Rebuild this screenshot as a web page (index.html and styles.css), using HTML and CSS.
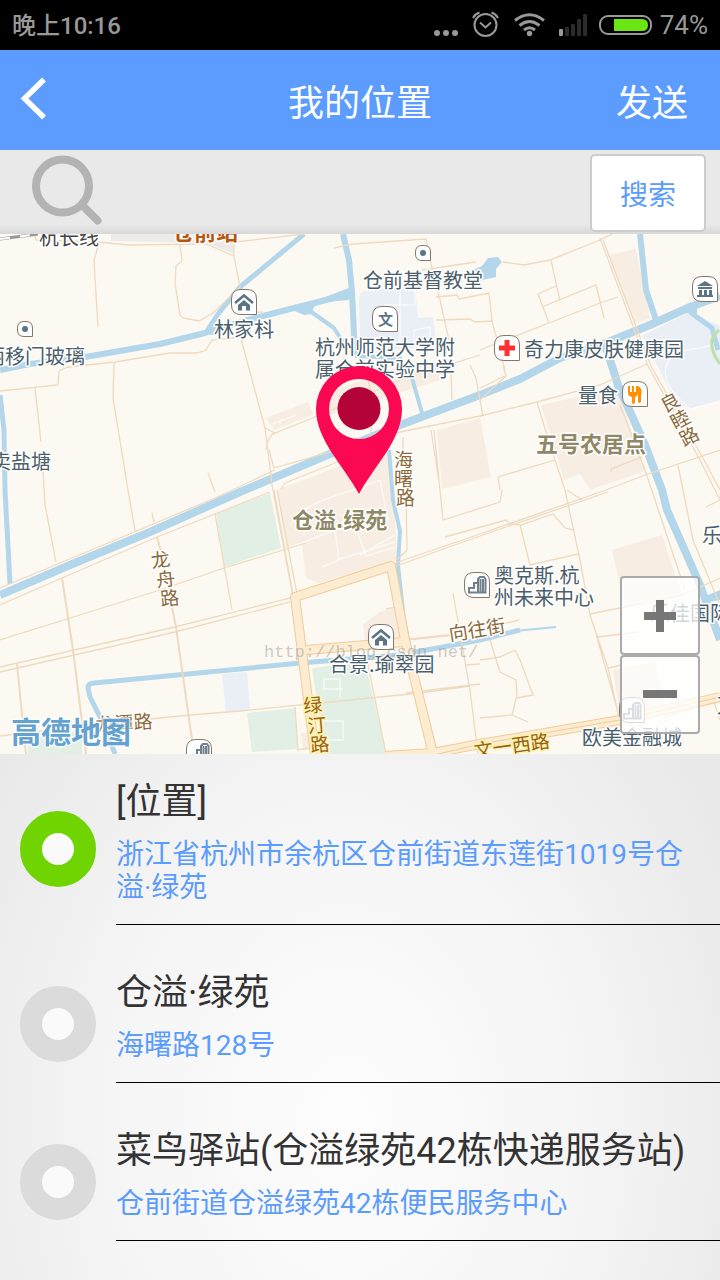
FILE: index.html
```html
<!DOCTYPE html>
<html lang="zh-CN">
<head>
<meta charset="utf-8">
<meta name="viewport" content="width=device-width, initial-scale=1">
<title>我的位置</title>
<link rel="stylesheet" href="styles.css">
</head>
<body>
<div class="screen">
  <div class="status">
    <span class="status-time">晚上10:16</span>
    <div class="status-icons">
      <svg width="220" height="30" viewBox="434 10 220 30" aria-hidden="true">
        <g fill="#999"><circle cx="437" cy="33" r="3"/><circle cx="446" cy="33" r="3"/><circle cx="455" cy="33" r="3"/></g>
        <g fill="none" stroke="#999" stroke-width="2">
          <circle cx="485.500" cy="25" r="11"/><path d="M480 22.500l5.500 5 5.500-5M473 18q2-4 6.500-5.500M498 18q-2-4-6.500-5.500"/>
        </g>
        <g fill="none" stroke="#999" stroke-width="3">
          <path d="M515 20.500q14.500-11.500 29 0M519.500 25.500q10-8 20 0M524 30q5.500-4.500 11 0"/>
        </g>
        <circle cx="529.500" cy="33.500" r="2.700" fill="#999"/>
        <rect x="559" y="29" width="4" height="7" rx="1" fill="#999"/>
        <g fill="#2b2b2b"><rect x="565" y="27" width="4" height="9" rx="1"/><rect x="571" y="24" width="4" height="12" rx="1"/><rect x="577" y="19" width="4" height="17" rx="1"/><rect x="583" y="14" width="4" height="22" rx="1"/></g>
        <rect x="600" y="16" width="51" height="18" rx="8" fill="none" stroke="#999" stroke-width="2"/>
        <path d="M614 19h28q6 0 6 6t-6 6h-28z" fill="#69e614"/>
      </svg>
      <span class="status-battery">74%</span>
    </div>
  </div>

  <header class="header">
    <button class="back" type="button" aria-label="返回">
      <svg width="28" height="48" viewBox="20 76 28 48" aria-hidden="true"><path d="M44 79.500L24.500 98.500 44 117.500" fill="none" stroke="#fff" stroke-width="5.500"/></svg>
    </button>
    <h1 class="title">我的位置</h1>
    <button class="send" type="button">发送</button>
  </header>

  <form class="search" onsubmit="return false">
    <label class="search-icon" for="q" aria-label="搜索地点">
      <svg width="72" height="74" viewBox="31 154 72 74" aria-hidden="true"><circle cx="62.500" cy="186" r="26.500" fill="none" stroke="#b3b3b3" stroke-width="8"/><path d="M83 206L97.500 220.500" stroke="#b3b3b3" stroke-width="8" stroke-linecap="round"/></svg>
    </label>
    <input class="search-input" id="q" type="text">
    <button class="search-button" type="submit">搜索</button>
  </form>

  <section class="map" aria-label="地图">
    <svg class="map-canvas" viewBox="0 234 720 520">
      <defs>
        <path id="bubble" d="M-3-12.500H3Q12.500-12.500 12.500-3V12.500H-3Q-12.500 12.500-12.500 3V-3Q-12.500-12.500-3-12.500z"/>
        <path id="dot-bubble" d="M-1-7.500H1Q7.500-7.500 7.500-1V7.500H-1Q-7.500 7.500-7.500 1V-1Q-7.500-7.500-1-7.500z"/>
        <g id="home"><path d="M-9 1L0-6.500 9 1" fill="none" stroke="#5c7585" stroke-width="2.500"/><path d="M-6 3L0-2 6 3V8.500H2V4H-2V8.500H-6z" fill="#5c7585"/></g>
        <g id="tower" fill="#fff" stroke="#70818b" stroke-width="2"><path d="M-9 7.500V3H-4V-2H0V7.500zM0 7.500V-6L2-8H6L7.500-6V7.500z"/><path d="M2.500-6V7M5-6V7"/></g>
      </defs>
      <rect y="234" width="720" height="520" fill="#fcf9f2"/>

      <g fill="#f7ede2">
        <path d="M266 418L308 402 313 415 274 430zM320 395L400 367 444 365 446 378 330 415zM277 490L382 450 391 452 397 560 318 583 306 578 302 543 286 547zM437 430L480 418 491 477 442 489zM541 405L617 388 645 471 590 490 580 474 564 480zM609 255L636 249 650 318 635 324zM612 550L662 535 682 595 625 607zM613 670L655 662 665 705 620 715zM363 624L380 612 395 608 401 640 365 645zM301 733L325 730 327 748 303 750z"/>
      </g>
      <g fill="#e2efe5">
        <path d="M216 514L270 493 281 548 224 567zM312 668L365 662 383 740 385 754H325zM247 713L295 708 298 749 252 752zM28 738L82 731V754H28z"/>
      </g>
      <g fill="#eaeef5">
        <path d="M359 298Q360 290 368 291L415 285 418 318 433 317 436 343 400 350 360 342zM222 674L247 672 250 709 226 712zM642 336L690 312 720 326V400L690 409 675 400z"/>
      </g>
      <path d="M111 234H234V254L206 243 111 241z" fill="#edebe8"/>
      <g fill="none" stroke="#fff" stroke-opacity=".65" stroke-width="1.500">
        <path d="M400 285V346M384 305H415V285M414 345V330L430 327V344M272 424L296 415M280 420V424M304 510L323 500 381 480M297 545L335 530 339 560 322 567M335 530L390 518M354 523L366 556 396 547M337 560L395 542M360 555L395 535M380 480L388 520M324 679H340V697M324 679V689H343M323 721H343V740H324M668 362L674 352 700 348 713 345M668 362Q660 375 675 395L690 409 720 402"/>
      </g>

      <g fill="none" stroke="#b3d6eb" stroke-linejoin="round">
        <path d="M0 370L30 364 85 357 160 344 205 333 240 322 290 309 350 294" stroke-width="6"/>
        <path d="M205 334L218 314 240 287 304 234" stroke-width="5"/>
        <path d="M343 234L349 260 352 292 355 356M640 234L646 290 656 320" stroke-width="6"/>
        <path d="M310 311L334 328 344 344M355 356L400 358 412 378 422 413" stroke-width="4"/>
        <path d="M0 595L70 565 150 532 240 492 330 454 400 425 480 395 520 379 560 358 603 344 650 325 690 307 720 296" stroke-width="8"/>
        <path d="M0 395L4 430 5 490 10 584" stroke-width="5"/>
        <path d="M605 344L618 385 645 445 662 490 667 510 700 585 720 640" stroke-width="8"/>
        <path d="M389 450L393 500 400 531 398 565 404 620 412 660 436 754" stroke-width="4"/>
        <path d="M115 754L105 727 90 697 88 688Q88 683 94 683L240 669 300 663 400 655 480 640 520 630" stroke-width="5"/>
        <path d="M515 631L556 627" stroke-width="2"/>
        <path d="M690 312L712 328 718 350" stroke-width="5"/>
      </g>
      <path d="M325 297L349 288V300L325 302Q309 306 313 314L304 315 290 309zM200 334L212 324 216 335zM470 271L482 266 488 258 498 257 502 262 496 269 496 277 478 281zM684 312L697 306V315zM708 595L720 590V600L708 602z" fill="#b3d6eb"/>
      <path d="M719 330Q704 342 720 364" fill="none" stroke="#bfe0a6" stroke-width="3"/>

      <g fill="none" stroke="#efdac0" stroke-width="1.300">
        <path d="M34 234L36 240 99 242 128 245 206 244 234 256 234 241M234 256L240 287M99 242L94 261 98 327M180 244L182 261 176 266 175 283 180 315 183 318 199 321 213 313 240 287M0 391L58 385 59 371 68 367 115 362 170 353 197 353 206 350 212 340 240 337M35 388L41 442M43 470L45 505 56 562M114 362L113 398 128 490 135 531M208 473L215 492"/>
        <path d="M0 588L60 563 120 538 215 498 275 470M0 605L62 578 157 537 215 514 270 492M152 513L154 522M0 640L67 619 160 590 224 568 306 543M0 667L175 627 290 598M0 672L175 632 290 602M0 736L100 724 190 715 240 711 320 703 420 693 470 686M215 514L232 610"/>
        <path d="M235 242L304 234M334 248L353 244 426 239 432 268 440 300 450 345 452 400M422 270L476 262M436 297L457 295 459 299 489 293 492 321 505 370M436 320L470 319 475 322 492 321M240 335L265 428 268 450 272 485 293 597M277 490L297 594M274 490L294 600M242 313L263 312M265 428L275 433 320 415 400 380 480 355M266 450Q268 435 275 433M269 450L274 468 400 432 480 416 537 402 600 385 647 364M281 489L285 483 350 457M368 380L375 408 370 435M470 365L476 378 480 400 506 376 503 365M403 437V460M431 430L440 488M434 430L443 520 500 502 502 490M480 400L483 416"/>
        <path d="M395 563L480 534 606 490M397 560L407 550 406 490M396 566L480 536 608 492M445 537L506 520 510 524 521 525 553 514 565 528 573 530M453 593L463 650 470 690 478 754M406 693L480 684M480 664L466 665M366 655L386 754M386 609L396 607M403 640L455 635 519 620M295 707L298 750 310 748"/>
        <path d="M612 234L600 240 550 260 524 265 503 262M551 260L560 301M556 286L538 294 549 323 480 350M542 307L596 285 604 318M549 323L600 303 618 297M600 238L648 366 700 460 720 500M603 240L651 366 704 460 720 490M537 402L550 445 565 490 580 560 590 615 608 668 620 722M567 490L582 500M498 477L555 460M498 477L500 490M480 388L505 376M620 405L645 470 685 590M606 490L645 475 720 450M678 465L693 540 720 605M520 525L530 565 578 554M590 614L680 596 720 578M597 637L638 632M596 634L618 712M608 668L622 665M706 507L720 500M665 717L714 702 720 720M490 640L500 672 516 680 517 695 512 715 480 718M512 715L528 722M480 660L500 657 515 650 520 660 533 695 516 698M611 472L611 469 642 457"/>
        <path d="M62 578L73 650 86 754M157 537L164 562M172 607L176 627 192 740M17 664L26 754M403 640L450 635" stroke-width="2"/>
      </g>

      <g fill="none" stroke-linejoin="round">
        <path d="M306 650L403 642M315 754L295 597 391 566 405 640 433 754M385 756L433 753 480 744 620 720 720 697" stroke="#f1cc98" stroke-width="10"/>
        <path d="M306 650L403 642M315 754L295 597 391 566 405 640 433 754M385 756L433 753 480 744 620 720 720 697" stroke="#fbecd2" stroke-width="8"/>
        <path d="M430 756L480 744 620 720 720 697" stroke="#f1cc98"/>
        <path d="M0 239L38 234" stroke="#999" stroke-width="3"/>
        <path d="M0 239L38 234" stroke="#fff" stroke-width="2" stroke-dasharray="10 10"/>
      </g>

      <g fill="#fff" stroke="#857868">
        <use href="#bubble" x="244" y="302"/><use href="#bubble" x="385" y="319"/><use href="#bubble" x="507" y="348"/><use href="#bubble" x="635" y="394"/><use href="#bubble" x="705" y="289"/><use href="#bubble" x="381" y="637"/><use href="#bubble" x="477" y="585"/><use href="#bubble" x="632" y="710"/><use href="#bubble" x="199" y="752"/>
        <use href="#dot-bubble" x="25" y="329"/><use href="#dot-bubble" x="423" y="253"/>
      </g>
      <g fill="#5c7585"><circle cx="25" cy="329" r="3"/><circle cx="423" cy="253" r="3"/></g>
      <use href="#home" x="244" y="302"/><use href="#home" x="381" y="637"/>
      <use href="#tower" x="478" y="585"/><use href="#tower" x="633" y="711"/><use href="#tower" x="201" y="752"/>
      <path d="M499 348H515M507 340V356" stroke="#ff3131" stroke-width="5"/>
      <g fill="#ff9100"><path d="M628 386h2v6h2v-6h2v6h2v-6h2v7q0 3-3 4v6q-2 2-3 0v-6q-4-1-4-4z"/><path d="M638 386q5 2 3 10v6q-2 2-3 0z"/></g>
      <path d="M697 286L705 281 713 286zM698 287H712V289H698zM699 290H702V295H699zM704 290H707V295H704zM709 290H712V295H709zM697 295H713V297H697z" fill="#5c7585"/>

      <g class="poi">
        <text x="214" y="337">林家枓</text>
        <text x="363" y="288">仓前基督教堂</text>
        <text x="315" y="355">杭州师范大学附</text>
        <text x="315" y="377">属仓前实验中学</text>
        <text x="524" y="357">奇力康皮肤健康园</text>
        <text x="578" y="403">量食</text>
        <text x="-15" y="364">丽移门玻璃</text>
        <text x="-9" y="469">卖盐塘</text>
        <text x="494" y="583">奥克斯.杭</text>
        <text x="494" y="605">州未来中心</text>
        <text x="329" y="672">合景.瑜翠园</text>
        <text x="702" y="543">乐</text>
        <text x="650" y="621">乐佳国际</text>
        <text x="582" y="745">欧美金融城</text>
        <text x="717" y="713">万</text>
        <text class="poi-school" x="378" y="325">文</text>
      </g>
      <text class="rail" x="39" y="245">杭长线</text>
      <text class="station" x="172" y="240">仓前站</text>
      <g class="area"><text x="536" y="452">五号农居点</text><text x="292" y="528">仓溢.绿苑</text></g>
      <g class="street">
        <text x="394" y="467">海</text><text x="394" y="486">曙</text><text x="396" y="505">路</text>
        <text transform="translate(152 568) rotate(-8)">龙</text><text transform="translate(157 587) rotate(-6)">舟</text><text transform="translate(161 606) rotate(-6)">路</text>
        <text transform="translate(665 413) rotate(-28)">良</text><text transform="translate(675 430) rotate(-28)">睦</text><text transform="translate(684 447) rotate(-28)">路</text>
        <text transform="translate(450 641) rotate(-9)">向往街</text>
        <text transform="translate(96 732) rotate(-4)">龙潭路</text>
      </g>
      <g class="street avenue">
        <text transform="translate(304 713) rotate(-5)">绿</text><text transform="translate(308 733) rotate(-5)">汀</text><text transform="translate(311 752) rotate(-5)">路</text>
        <text transform="translate(475 758) rotate(-8)">文一西路</text>
      </g>
      <text class="brand" x="11" y="743">高德地图</text>
      <text class="mark" x="264" y="657">http://blog.csdn.net/</text>

      <path d="M359 494C344 466 316 440 316 409A43 43 0 0 1 402 409C402 440 374 466 359 494zM359 379A30 30 0 1 0 359 439 30 30 0 1 0 359 379z" fill="#fb0853" fill-rule="evenodd"/>
      <circle cx="359" cy="408.500" r="21.500" fill="#b30338"/>
    </svg>
    <div class="zoom">
      <button class="zoom-button" type="button" aria-label="放大"><svg width="34" height="34" viewBox="0 0 34 34" aria-hidden="true"><path d="M1 17H33M17 1V33" stroke="#777" stroke-width="8"/></svg></button>
      <button class="zoom-button" type="button" aria-label="缩小"><svg width="34" height="34" viewBox="0 0 34 34" aria-hidden="true"><path d="M0 16H34" stroke="#777" stroke-width="8"/></svg></button>
    </div>
  </section>

  <main class="places">
    <label class="place">
      <input class="place-radio" type="radio" name="place" checked>
      <span class="place-body"><span class="place-name">[位置]</span><span class="place-address">浙江省杭州市余杭区仓前街道东莲街1019号仓溢·绿苑</span></span>
    </label>
    <label class="place">
      <input class="place-radio" type="radio" name="place">
      <span class="place-body"><span class="place-name">仓溢·绿苑</span><span class="place-address">海曙路128号</span></span>
    </label>
    <label class="place">
      <input class="place-radio" type="radio" name="place">
      <span class="place-body"><span class="place-name">菜鸟驿站(仓溢绿苑42栋快递服务站)</span><span class="place-address">仓前街道仓溢绿苑42栋便民服务中心</span></span>
    </label>
  </main>
</div>
</body>
</html>
```
FILE: styles.css
```css
* { box-sizing: border-box; }
body {
  margin: 0;
  font-family: Roboto, "Noto Sans CJK SC", sans-serif;
  color: #333;
}
button, input { font: inherit; margin: 0; padding: 0; border: 0; background: none; }
button svg, .status svg, .search svg, .map-canvas { display: block; }
.screen { min-height: 100vh; display: flex; flex-direction: column; }

.status {
  height: 50px;
  padding: 0 12px;
  display: flex;
  align-items: center;
  justify-content: space-between;
  background: #000;
  color: #999;
}
.status-time { padding-bottom: 3px; font-size: 24px; font-weight: 500; }
.status-icons { display: flex; align-items: center; gap: 6px; }
.status-battery { font-size: 26px; }

.header {
  height: 100px;
  padding: 0 32px 0 20px;
  display: grid;
  grid-template-columns: 84px 1fr 72px;
  align-items: center;
  background: #5b9cfe;
  color: #fff;
}
.back { justify-self: start; }
.title { margin: 0; font-size: 36px; font-weight: 400; text-align: center; }
.send { font-size: 36px; color: #fff; }

.search {
  height: 84px;
  padding: 4px 14px 2px 31px;
  display: flex;
  background: linear-gradient(#e9e9e9 88%, #d8d8d8);
}
.search-input { flex: 1; min-width: 0; font-size: 28px; outline: 0; }
.search-button {
  width: 116px;
  border: 2px solid #ccc;
  border-radius: 5px;
  background: #fff;
  color: #5b9cfe;
  font-size: 28px;
}

.map { position: relative; overflow: hidden; }
.map-canvas { width: 100%; }
.map text {
  font-family: "Noto Sans CJK SC", sans-serif;
  paint-order: stroke;
  stroke: #fff;
  stroke-width: 3px;
  stroke-linejoin: round;
}
.poi text { font-size: 20px; fill: #4a5e6b; }
.map .poi-school { font-size: 15px; font-weight: 700; fill: #5c7585; }
.map .rail { font-size: 20px; fill: #444; }
.map .station { font-size: 22px; font-weight: 700; fill: #b8560f; }
.area text { font-size: 22px; font-weight: 700; fill: #8f8866; }
.street text { font-size: 19px; fill: #8c6a3b; }
.avenue text { stroke: #fff3a8; fill: #94611b; }
.map .brand { font-size: 30px; font-weight: 700; fill: #4f96cd; fill-opacity: .9; stroke-opacity: .7; }
.map .mark { font-family: "Liberation Mono", monospace; font-size: 17px; fill: #999; fill-opacity: .5; stroke: none; }
.zoom {
  position: absolute;
  right: 20px;
  bottom: 20px;
  display: grid;
}
.zoom-button {
  width: 80px;
  height: 79px;
  display: grid;
  place-items: center;
  border: 2px solid #aaa;
  border-radius: 4px;
  background: rgba(255, 255, 255, .75);
}

.places {
  flex: 1;
  padding-bottom: 39px;
  background: radial-gradient(ellipse 60% 110% at 48% 70%, #fdfdfd, #f5f5f5 55%, #e9e9e9);
}
.place {
  padding: 47px 0 0 20px;
  display: grid;
  grid-template-columns: 76px 1fr;
  column-gap: 20px;
  align-items: center;
}
.place:first-child { padding-top: 27px; }
.place-radio {
  appearance: none;
  width: 76px;
  height: 76px;
  margin-bottom: 8px;
  border: 22px solid #dbdbdb;
  border-radius: 50%;
  background: #fafafa;
}
.place-radio:checked { border-color: #6fd400; }
.place-body {
  display: grid;
  row-gap: 15px;
  padding-bottom: 20px;
  border-bottom: 1px solid #000;
}
.place-name { font-size: 36px; line-height: 42px; }
.place-address { padding-right: 32px; font-size: 28px; line-height: 33px; color: #5b9cfe; }
```
